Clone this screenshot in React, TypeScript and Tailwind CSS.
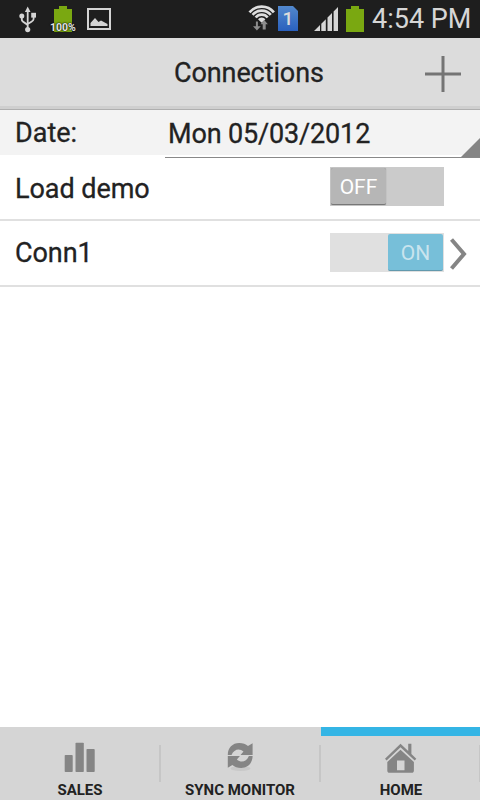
import type { ReactNode } from 'react'
import clsx from 'clsx'

function UsbIcon() {
  return (
    <svg width="18" height="27" viewBox="0 0 18 27" fill="none" stroke="#d4d4d4" strokeWidth="1.8">
      <path d="M8.7 5v17M2.8 11v2.5c0 1.8 1.4 2.6 3 3.4l2.9 2M14.6 10v3c0 1.8-1.4 2.2-3 3.2l-2.9 1.8" />
      <path d="M8.7 .5l2.8 5.500H5.900z" fill="#d4d4d4" stroke="none" />
      <circle cx="8.7" cy="23.600" r="2.600" fill="#d4d4d4" stroke="none" />
      <circle cx="2.8" cy="10" r="2.500" fill="#d4d4d4" stroke="none" />
      <path d="M12.200 6.800h4.800v4.800h-4.800z" fill="#d4d4d4" stroke="none" />
    </svg>
  )
}

function BatteryIcon() {
  return (
    <svg width="18" height="26" viewBox="0 0 18 26" fill="#7aa811">
      <path d="M5 0h8v3h5v23H0V3h5z" />
    </svg>
  )
}

function PictureIcon() {
  return (
    <svg width="24" height="22" viewBox="0 0 24 22">
      <rect x="1" y="1" width="22" height="20" fill="none" stroke="#d4d4d4" strokeWidth="2" />
      <path d="M3.5 18v-3L8 10l3.500 4 2.500-1.500 6.500 3.500v2z" fill="#d4d4d4" />
    </svg>
  )
}

function WifiIcon() {
  return (
    <svg width="28" height="28" viewBox="0 0 28 28" fill="none">
      <g stroke="#dedede" strokeWidth="2.7">
        <path d="M1.5 8.400A15.700 15.700 0 0 1 25.900 8.400" />
        <path d="M4.600 10.900A11.700 11.700 0 0 1 22.800 10.900" />
        <path d="M7.700 13.500A7.700 7.700 0 0 1 19.700 13.500" />
      </g>
      <path d="M10 15.300A4.800 4.800 0 0 1 17.400 15.300L13.700 18.800z" fill="#dedede" />
      <path
        d="M9.900 17.500v4.700h2.900L8.900 26.500 5 22.200h2.900v-4.700zM17.700 25.500h-3v-5.200h-2.200l3.700-4.300 3.700 4.300h-2.200z"
        fill="#8d8d8d"
      />
    </svg>
  )
}

function SignalIcon() {
  return (
    <svg width="24" height="24" viewBox="0 0 24 24" fill="#d6d6d6">
      <path d="M0 24l6-6v6zM7.300 24v-7.300l4.500-4.500V24zM13.500 24V10.500L18 6v18zM19.600 24V4.400L24 0v24z" />
    </svg>
  )
}

function SalesIcon() {
  return (
    <svg width="32" height="31" viewBox="0 0 32 31" fill="#858585">
      <rect x=".7" y="13" width="8" height="17" rx=".8" />
      <rect x="11.500" y=".7" width="8.300" height="29.300" rx=".8" />
      <rect x="22.500" y="7" width="8.200" height="23" rx=".8" />
    </svg>
  )
}

function SyncIcon() {
  const arrow = 'M1.800 12.900C1.800 6 6.500 1.100 13.200 1.100c3.700 0 6.600 1 8.800 3L26.600 1.300V12.900H14.500L17.500 9.500C13.500 5.800 8 7 5.500 12.900z'
  return (
    <svg width="28" height="30" viewBox="0 0 28 30" fill="#858585">
      <ellipse cx="14.500" cy="26.500" rx="10" ry="2.500" fill="#c8c8c8" />
      <path d={arrow} />
      <path d={arrow} transform="rotate(180 14.2 13.500)" />
    </svg>
  )
}

function HomeIcon() {
  return (
    <svg width="34" height="32" viewBox="0 0 34 32" fill="#858585">
      <path d="M16.500 1.800L1 16.800l1.600 1.700L16.500 5.300l14.200 13.200 1.600-1.700-4.900-4.700V1.800h-3.200V9z" />
      <path
        d="M16.500 7.800L3.300 20v8.500c0 1.500.8 2.300 2.300 2.300h22c1.500 0 2.300-.8 2.300-2.300V20zM13 18.500h7.500v9.800H13z"
        fillRule="evenodd"
      />
    </svg>
  )
}

function StatusBar() {
  return (
    <div className="flex h-[38px] shrink-0 bg-[#1e1e1e] text-[#d6d6d6]">
      <div className="ml-[19px] mt-1.5">
        <UsbIcon />
      </div>
      <div className="relative ml-[17px] mt-1.5">
        <BatteryIcon />
        <span className="absolute -left-[4px] top-[16px] text-[10.5px] leading-3 font-bold text-[#e4e4e4] [text-shadow:0_0_2px_#000,0_0_1px_#000]">
          100%
        </span>
      </div>
      <div className="ml-[15px] mt-2">
        <PictureIcon />
      </div>
      <div className="ml-[137px] mt-1">
        <WifiIcon />
      </div>
      <div className="ml-0.5 mt-1.5 h-[25px] w-5 bg-linear-to-b from-[#5288cd] to-[#2a60bd] text-center text-[19px] leading-[26px] font-medium text-[#dcdcdc] [clip-path:polygon(0_0,15px_0,100%_5px,100%_100%,0_100%)]">
        1
      </div>
      <div className="ml-4 mt-[7px]">
        <SignalIcon />
      </div>
      <div className="ml-2 mt-1.5">
        <BatteryIcon />
      </div>
      <span className="ml-2 whitespace-nowrap text-[27px] leading-[38px]">4:54 PM</span>
    </div>
  )
}

function Toggle({ on = false }: { on?: boolean }) {
  return (
    <div className={clsx('flex h-[39px] w-[114px] p-px', on ? 'justify-end bg-[#e0e0e0]' : 'bg-[#cbcbcb]')}>
      <span
        className={clsx(
          'h-[37px] w-[55px] rounded-xs border-b text-center text-[21px] leading-[38px]',
          on ? 'border-[#6299ad] bg-[#77bfd9] text-[#c9e4ee]' : 'border-[#777] bg-[#b6b6b6] text-white shadow-[0_0_1px_#777]',
        )}
      >
        {on ? 'ON' : 'OFF'}
      </span>
    </div>
  )
}

function Row({ label, children }: { label: string; children: ReactNode }) {
  return (
    <div className="flex border-b-2 border-[#e0e0e0] pl-[15px]">
      <span className="w-[315px] self-center text-[27px] leading-[60px] tracking-[-0.05px] [-webkit-text-stroke:0.3px]">
        {label}
      </span>
      {children}
    </div>
  )
}

function Tab({ label, icon, active = false }: { label: string; icon: ReactNode; active?: boolean }) {
  return (
    <div className="flex w-40 flex-col">
      <div className={clsx('h-[9px]', active && 'ml-px bg-[#34b5e5]')} />
      <div className={clsx('flex h-16 flex-col items-center', active && 'pl-0.5')}>
        <div className="flex h-[44px] w-full items-start justify-center pt-1.5">{icon}</div>
        <span className="text-[15px] leading-5 font-bold whitespace-nowrap">{label}</span>
      </div>
    </div>
  )
}

function Divider() {
  return <span className="-mx-px mt-[18px] h-[37px] w-0.5 bg-[#c6c6c6]" />
}

export default function App() {
  return (
    <div className="flex h-[800px] w-[480px] flex-col overflow-hidden bg-white font-[Roboto,sans-serif] text-[#222]">
      <StatusBar />
      <header className="flex h-[72px] shrink-0 border-b border-[#afafaf] bg-[#dcdcdc] shadow-[inset_0_-3px_#cfcfcf]">
        <h1 className="ml-[174px] w-[251px] text-[27px] leading-[71px] tracking-[-0.1px] [-webkit-text-stroke:0.3px]">
          Connections
        </h1>
        <svg className="mt-[18px]" width="36" height="36" viewBox="0 0 36 36" stroke="#747474" strokeWidth="3">
          <path d="M0 18h36M18 0v36" />
        </svg>
      </header>
      <div className="flex h-12 shrink-0">
        <span className="h-[45px] w-[165px] bg-[#f3f3f3] pl-[15px] text-[27px] leading-[47px] [-webkit-text-stroke:0.3px]">
          Date:
        </span>
        <div className="flex flex-1 justify-between border-b border-[#888] bg-[linear-gradient(#f3f3f3_45px,#fff_45px)]">
          <span className="pl-[3px] text-[27px] leading-[49px] tracking-[-0.15px] [-webkit-text-stroke:0.3px]">
            Mon 05/03/2012
          </span>
          <svg className="self-end" width="19" height="19" viewBox="0 0 19 19" fill="#858585">
            <path d="M19 0v19H0z" />
          </svg>
        </div>
      </div>
      <Row label="Load demo">
        <div className="h-[61px] pt-[9px]">
          <Toggle />
        </div>
      </Row>
      <Row label="Conn1">
        <div className="flex h-16 pt-3">
          <Toggle on />
          <svg className="ml-[6px] mt-[5px]" width="18" height="32" viewBox="0 0 18 32" fill="none" stroke="#858585" strokeWidth="4">
            <path d="M1.500 1.500L14 16 1.500 30.500" />
          </svg>
        </div>
      </Row>
      <nav className="mt-auto flex h-[73px] bg-[#d5d5d5]">
        <Tab label="SALES" icon={<SalesIcon />} />
        <Divider />
        <Tab label="SYNC MONITOR" icon={<SyncIcon />} />
        <Divider />
        <Tab label="HOME" icon={<HomeIcon />} active />
        <Divider />
      </nav>
    </div>
  )
}
